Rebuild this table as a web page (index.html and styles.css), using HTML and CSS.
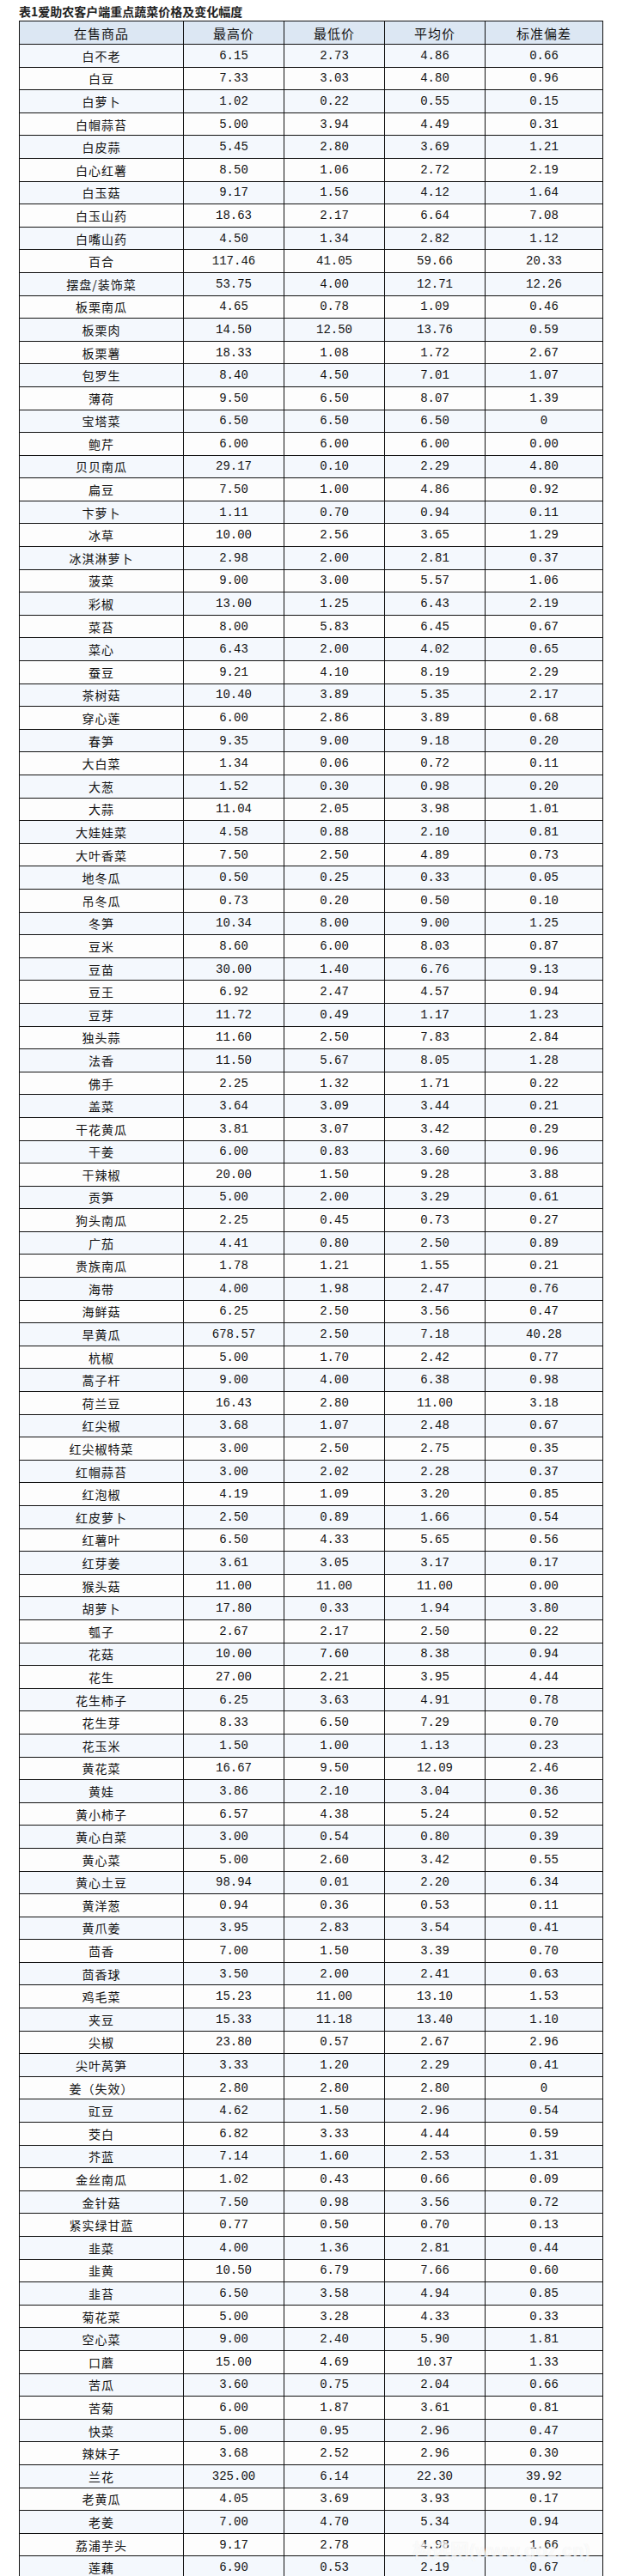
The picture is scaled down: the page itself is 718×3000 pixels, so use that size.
FILE: index.html
```html
<!DOCTYPE html>
<html lang="zh-CN">
<head>
<meta charset="utf-8">
<title>表1爱助农客户端重点蔬菜价格及变化幅度</title>
<link rel="stylesheet" href="styles.css">
</head>
<body>
<div class="page">
  <h1 class="title">表1爱助农客户端重点蔬菜价格及变化幅度</h1>
  <table class="price-table">
    <colgroup>
      <col class="c-name"><col class="c-num"><col class="c-num"><col class="c-num"><col class="c-sd">
    </colgroup>
    <thead>
      <tr><th>在售商品</th><th>最高价</th><th>最低价</th><th>平均价</th><th>标准偏差</th></tr>
    </thead>
    <tbody>
      <tr><td class="name">白不老</td><td>6.15</td><td>2.73</td><td>4.86</td><td>0.66</td></tr>
      <tr><td class="name">白豆</td><td>7.33</td><td>3.03</td><td>4.80</td><td>0.96</td></tr>
      <tr><td class="name">白萝卜</td><td>1.02</td><td>0.22</td><td>0.55</td><td>0.15</td></tr>
      <tr><td class="name">白帽蒜苔</td><td>5.00</td><td>3.94</td><td>4.49</td><td>0.31</td></tr>
      <tr><td class="name">白皮蒜</td><td>5.45</td><td>2.80</td><td>3.69</td><td>1.21</td></tr>
      <tr><td class="name">白心红薯</td><td>8.50</td><td>1.06</td><td>2.72</td><td>2.19</td></tr>
      <tr><td class="name">白玉菇</td><td>9.17</td><td>1.56</td><td>4.12</td><td>1.64</td></tr>
      <tr><td class="name">白玉山药</td><td>18.63</td><td>2.17</td><td>6.64</td><td>7.08</td></tr>
      <tr><td class="name">白嘴山药</td><td>4.50</td><td>1.34</td><td>2.82</td><td>1.12</td></tr>
      <tr><td class="name">百合</td><td>117.46</td><td>41.05</td><td>59.66</td><td>20.33</td></tr>
      <tr><td class="name">摆盘/装饰菜</td><td>53.75</td><td>4.00</td><td>12.71</td><td>12.26</td></tr>
      <tr><td class="name">板栗南瓜</td><td>4.65</td><td>0.78</td><td>1.09</td><td>0.46</td></tr>
      <tr><td class="name">板栗肉</td><td>14.50</td><td>12.50</td><td>13.76</td><td>0.59</td></tr>
      <tr><td class="name">板栗薯</td><td>18.33</td><td>1.08</td><td>1.72</td><td>2.67</td></tr>
      <tr><td class="name">包罗生</td><td>8.40</td><td>4.50</td><td>7.01</td><td>1.07</td></tr>
      <tr><td class="name">薄荷</td><td>9.50</td><td>6.50</td><td>8.07</td><td>1.39</td></tr>
      <tr><td class="name">宝塔菜</td><td>6.50</td><td>6.50</td><td>6.50</td><td>0</td></tr>
      <tr><td class="name">鲍芹</td><td>6.00</td><td>6.00</td><td>6.00</td><td>0.00</td></tr>
      <tr><td class="name">贝贝南瓜</td><td>29.17</td><td>0.10</td><td>2.29</td><td>4.80</td></tr>
      <tr><td class="name">扁豆</td><td>7.50</td><td>1.00</td><td>4.86</td><td>0.92</td></tr>
      <tr><td class="name">卞萝卜</td><td>1.11</td><td>0.70</td><td>0.94</td><td>0.11</td></tr>
      <tr><td class="name">冰草</td><td>10.00</td><td>2.56</td><td>3.65</td><td>1.29</td></tr>
      <tr><td class="name">冰淇淋萝卜</td><td>2.98</td><td>2.00</td><td>2.81</td><td>0.37</td></tr>
      <tr><td class="name">菠菜</td><td>9.00</td><td>3.00</td><td>5.57</td><td>1.06</td></tr>
      <tr><td class="name">彩椒</td><td>13.00</td><td>1.25</td><td>6.43</td><td>2.19</td></tr>
      <tr><td class="name">菜苔</td><td>8.00</td><td>5.83</td><td>6.45</td><td>0.67</td></tr>
      <tr><td class="name">菜心</td><td>6.43</td><td>2.00</td><td>4.02</td><td>0.65</td></tr>
      <tr><td class="name">蚕豆</td><td>9.21</td><td>4.10</td><td>8.19</td><td>2.29</td></tr>
      <tr><td class="name">茶树菇</td><td>10.40</td><td>3.89</td><td>5.35</td><td>2.17</td></tr>
      <tr><td class="name">穿心莲</td><td>6.00</td><td>2.86</td><td>3.89</td><td>0.68</td></tr>
      <tr><td class="name">春笋</td><td>9.35</td><td>9.00</td><td>9.18</td><td>0.20</td></tr>
      <tr><td class="name">大白菜</td><td>1.34</td><td>0.06</td><td>0.72</td><td>0.11</td></tr>
      <tr><td class="name">大葱</td><td>1.52</td><td>0.30</td><td>0.98</td><td>0.20</td></tr>
      <tr><td class="name">大蒜</td><td>11.04</td><td>2.05</td><td>3.98</td><td>1.01</td></tr>
      <tr><td class="name">大娃娃菜</td><td>4.58</td><td>0.88</td><td>2.10</td><td>0.81</td></tr>
      <tr><td class="name">大叶香菜</td><td>7.50</td><td>2.50</td><td>4.89</td><td>0.73</td></tr>
      <tr><td class="name">地冬瓜</td><td>0.50</td><td>0.25</td><td>0.33</td><td>0.05</td></tr>
      <tr><td class="name">吊冬瓜</td><td>0.73</td><td>0.20</td><td>0.50</td><td>0.10</td></tr>
      <tr><td class="name">冬笋</td><td>10.34</td><td>8.00</td><td>9.00</td><td>1.25</td></tr>
      <tr><td class="name">豆米</td><td>8.60</td><td>6.00</td><td>8.03</td><td>0.87</td></tr>
      <tr><td class="name">豆苗</td><td>30.00</td><td>1.40</td><td>6.76</td><td>9.13</td></tr>
      <tr><td class="name">豆王</td><td>6.92</td><td>2.47</td><td>4.57</td><td>0.94</td></tr>
      <tr><td class="name">豆芽</td><td>11.72</td><td>0.49</td><td>1.17</td><td>1.23</td></tr>
      <tr><td class="name">独头蒜</td><td>11.60</td><td>2.50</td><td>7.83</td><td>2.84</td></tr>
      <tr><td class="name">法香</td><td>11.50</td><td>5.67</td><td>8.05</td><td>1.28</td></tr>
      <tr><td class="name">佛手</td><td>2.25</td><td>1.32</td><td>1.71</td><td>0.22</td></tr>
      <tr><td class="name">盖菜</td><td>3.64</td><td>3.09</td><td>3.44</td><td>0.21</td></tr>
      <tr><td class="name">干花黄瓜</td><td>3.81</td><td>3.07</td><td>3.42</td><td>0.29</td></tr>
      <tr><td class="name">干姜</td><td>6.00</td><td>0.83</td><td>3.60</td><td>0.96</td></tr>
      <tr><td class="name">干辣椒</td><td>20.00</td><td>1.50</td><td>9.28</td><td>3.88</td></tr>
      <tr><td class="name">贡笋</td><td>5.00</td><td>2.00</td><td>3.29</td><td>0.61</td></tr>
      <tr><td class="name">狗头南瓜</td><td>2.25</td><td>0.45</td><td>0.73</td><td>0.27</td></tr>
      <tr><td class="name">广茄</td><td>4.41</td><td>0.80</td><td>2.50</td><td>0.89</td></tr>
      <tr><td class="name">贵族南瓜</td><td>1.78</td><td>1.21</td><td>1.55</td><td>0.21</td></tr>
      <tr><td class="name">海带</td><td>4.00</td><td>1.98</td><td>2.47</td><td>0.76</td></tr>
      <tr><td class="name">海鲜菇</td><td>6.25</td><td>2.50</td><td>3.56</td><td>0.47</td></tr>
      <tr><td class="name">旱黄瓜</td><td>678.57</td><td>2.50</td><td>7.18</td><td>40.28</td></tr>
      <tr><td class="name">杭椒</td><td>5.00</td><td>1.70</td><td>2.42</td><td>0.77</td></tr>
      <tr><td class="name">蒿子杆</td><td>9.00</td><td>4.00</td><td>6.38</td><td>0.98</td></tr>
      <tr><td class="name">荷兰豆</td><td>16.43</td><td>2.80</td><td>11.00</td><td>3.18</td></tr>
      <tr><td class="name">红尖椒</td><td>3.68</td><td>1.07</td><td>2.48</td><td>0.67</td></tr>
      <tr><td class="name">红尖椒特菜</td><td>3.00</td><td>2.50</td><td>2.75</td><td>0.35</td></tr>
      <tr><td class="name">红帽蒜苔</td><td>3.00</td><td>2.02</td><td>2.28</td><td>0.37</td></tr>
      <tr><td class="name">红泡椒</td><td>4.19</td><td>1.09</td><td>3.20</td><td>0.85</td></tr>
      <tr><td class="name">红皮萝卜</td><td>2.50</td><td>0.89</td><td>1.66</td><td>0.54</td></tr>
      <tr><td class="name">红薯叶</td><td>6.50</td><td>4.33</td><td>5.65</td><td>0.56</td></tr>
      <tr><td class="name">红芽姜</td><td>3.61</td><td>3.05</td><td>3.17</td><td>0.17</td></tr>
      <tr><td class="name">猴头菇</td><td>11.00</td><td>11.00</td><td>11.00</td><td>0.00</td></tr>
      <tr><td class="name">胡萝卜</td><td>17.80</td><td>0.33</td><td>1.94</td><td>3.80</td></tr>
      <tr><td class="name">瓠子</td><td>2.67</td><td>2.17</td><td>2.50</td><td>0.22</td></tr>
      <tr><td class="name">花菇</td><td>10.00</td><td>7.60</td><td>8.38</td><td>0.94</td></tr>
      <tr><td class="name">花生</td><td>27.00</td><td>2.21</td><td>3.95</td><td>4.44</td></tr>
      <tr><td class="name">花生柿子</td><td>6.25</td><td>3.63</td><td>4.91</td><td>0.78</td></tr>
      <tr><td class="name">花生芽</td><td>8.33</td><td>6.50</td><td>7.29</td><td>0.70</td></tr>
      <tr><td class="name">花玉米</td><td>1.50</td><td>1.00</td><td>1.13</td><td>0.23</td></tr>
      <tr><td class="name">黄花菜</td><td>16.67</td><td>9.50</td><td>12.09</td><td>2.46</td></tr>
      <tr><td class="name">黄娃</td><td>3.86</td><td>2.10</td><td>3.04</td><td>0.36</td></tr>
      <tr><td class="name">黄小柿子</td><td>6.57</td><td>4.38</td><td>5.24</td><td>0.52</td></tr>
      <tr><td class="name">黄心白菜</td><td>3.00</td><td>0.54</td><td>0.80</td><td>0.39</td></tr>
      <tr><td class="name">黄心菜</td><td>5.00</td><td>2.60</td><td>3.42</td><td>0.55</td></tr>
      <tr><td class="name">黄心土豆</td><td>98.94</td><td>0.01</td><td>2.20</td><td>6.34</td></tr>
      <tr><td class="name">黄洋葱</td><td>0.94</td><td>0.36</td><td>0.53</td><td>0.11</td></tr>
      <tr><td class="name">黄爪姜</td><td>3.95</td><td>2.83</td><td>3.54</td><td>0.41</td></tr>
      <tr><td class="name">茴香</td><td>7.00</td><td>1.50</td><td>3.39</td><td>0.70</td></tr>
      <tr><td class="name">茴香球</td><td>3.50</td><td>2.00</td><td>2.41</td><td>0.63</td></tr>
      <tr><td class="name">鸡毛菜</td><td>15.23</td><td>11.00</td><td>13.10</td><td>1.53</td></tr>
      <tr><td class="name">夹豆</td><td>15.33</td><td>11.18</td><td>13.40</td><td>1.10</td></tr>
      <tr><td class="name">尖椒</td><td>23.80</td><td>0.57</td><td>2.67</td><td>2.96</td></tr>
      <tr><td class="name">尖叶莴笋</td><td>3.33</td><td>1.20</td><td>2.29</td><td>0.41</td></tr>
      <tr><td class="name">姜（失效）</td><td>2.80</td><td>2.80</td><td>2.80</td><td>0</td></tr>
      <tr><td class="name">豇豆</td><td>4.62</td><td>1.50</td><td>2.96</td><td>0.54</td></tr>
      <tr><td class="name">茭白</td><td>6.82</td><td>3.33</td><td>4.44</td><td>0.59</td></tr>
      <tr><td class="name">芥蓝</td><td>7.14</td><td>1.60</td><td>2.53</td><td>1.31</td></tr>
      <tr><td class="name">金丝南瓜</td><td>1.02</td><td>0.43</td><td>0.66</td><td>0.09</td></tr>
      <tr><td class="name">金针菇</td><td>7.50</td><td>0.98</td><td>3.56</td><td>0.72</td></tr>
      <tr><td class="name">紧实绿甘蓝</td><td>0.77</td><td>0.50</td><td>0.70</td><td>0.13</td></tr>
      <tr><td class="name">韭菜</td><td>4.00</td><td>1.36</td><td>2.81</td><td>0.44</td></tr>
      <tr><td class="name">韭黄</td><td>10.50</td><td>6.79</td><td>7.66</td><td>0.60</td></tr>
      <tr><td class="name">韭苔</td><td>6.50</td><td>3.58</td><td>4.94</td><td>0.85</td></tr>
      <tr><td class="name">菊花菜</td><td>5.00</td><td>3.28</td><td>4.33</td><td>0.33</td></tr>
      <tr><td class="name">空心菜</td><td>9.00</td><td>2.40</td><td>5.90</td><td>1.81</td></tr>
      <tr><td class="name">口蘑</td><td>15.00</td><td>4.69</td><td>10.37</td><td>1.33</td></tr>
      <tr><td class="name">苦瓜</td><td>3.60</td><td>0.75</td><td>2.04</td><td>0.66</td></tr>
      <tr><td class="name">苦菊</td><td>6.00</td><td>1.87</td><td>3.61</td><td>0.81</td></tr>
      <tr><td class="name">快菜</td><td>5.00</td><td>0.95</td><td>2.96</td><td>0.47</td></tr>
      <tr><td class="name">辣妹子</td><td>3.68</td><td>2.52</td><td>2.96</td><td>0.30</td></tr>
      <tr><td class="name">兰花</td><td>325.00</td><td>6.14</td><td>22.30</td><td>39.92</td></tr>
      <tr><td class="name">老黄瓜</td><td>4.05</td><td>3.69</td><td>3.93</td><td>0.17</td></tr>
      <tr><td class="name">老姜</td><td>7.00</td><td>4.70</td><td>5.34</td><td>0.94</td></tr>
      <tr><td class="name">荔浦芋头</td><td>9.17</td><td>2.78</td><td>4.98</td><td>1.66</td></tr>
      <tr><td class="name">莲藕</td><td>6.90</td><td>0.53</td><td>2.19</td><td>0.67</td></tr>
    </tbody>
  </table>
  <div class="watermark">构选网(www.goz.cn)</div>
</div>
</body>
</html>
```

FILE: styles.css
```css
html, body {
  margin: 0;
  padding: 0;
  background: #ffffff;
}

.page {
  position: relative;
  width: 718px;
  padding: 0 0 0 22px;
  box-sizing: border-box;
}

.title {
  margin: 0;
  height: 24px;
  line-height: 26px;
  font-family: "Noto Sans CJK SC", "Liberation Sans", sans-serif;
  font-size: 14px;
  font-weight: 700;
  color: #222;
}

.price-table {
  border-collapse: collapse;
  table-layout: fixed;
  width: 679px;
  font-family: "Liberation Mono", "Noto Sans CJK SC", monospace;
  font-size: 14px;
  color: #111;
}

.c-name { width: 191px; }
.c-num { width: 117px; }
.c-sd { width: 137px; }

.price-table th,
.price-table td {
  border: 1px solid #111;
  padding: 0;
  text-align: center;
  vertical-align: middle;
  white-space: nowrap;
}

.price-table th {
  height: 26px;
  background: #dce7f3;
  font-family: "Noto Sans CJK SC", sans-serif;
  font-weight: 400;
  font-size: 15px;
  letter-spacing: 1px;
}

.price-table td {
  height: 25.6px;
  line-height: 16px;
}

.price-table td.name {
  font-family: "Noto Sans CJK SC", sans-serif;
  letter-spacing: 1px;
}

.price-table tbody tr:nth-child(odd) td {
  background: #f4f8fd;
}

.price-table tbody tr:nth-child(even) td {
  background: #fdfdfd;
}

.watermark {
  position: absolute;
  left: 480px;
  top: 2952px;
  font-family: "Liberation Sans", "Noto Sans CJK SC", sans-serif;
  font-size: 22px;
  font-weight: 700;
  color: rgba(255, 255, 255, 0.75);
  text-shadow: 0 0 1px rgba(0, 0, 0, 0.08);
  pointer-events: none;
}
```
